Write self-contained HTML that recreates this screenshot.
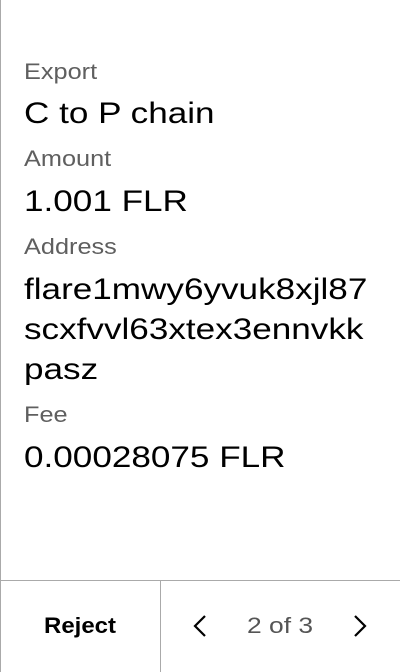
<!DOCTYPE html>
<html><head><style>
html,body{margin:0;padding:0;background:#fff;width:400px;height:672px;overflow:hidden;font-family:"Liberation Sans",sans-serif;position:relative}
.l{position:absolute;left:24px;font-size:22px;color:#5f5f5f;line-height:24px;transform:scaleX(1.15);transform-origin:0 0;white-space:nowrap}
.v{position:absolute;left:24px;font-size:30px;color:#000;line-height:34px;transform:scaleX(1.17);transform-origin:0 0;white-space:nowrap}
</style></head><body>
<div style="position:absolute;left:0;top:0;width:1px;height:672px;background:#aaa"></div>
<div class="l" style="top:60px">Export</div>
<div class="v" style="top:97px">C to P chain</div>
<div class="l" style="top:147px">Amount</div>
<div class="v" style="top:185px">1.001 FLR</div>
<div class="l" style="top:235px">Address</div>
<div class="v" style="top:273px">flare1mwy6yvuk8xjl87</div>
<div class="v" style="top:313px">scxfvvl63xtex3ennvkk</div>
<div class="v" style="top:353px">pasz</div>
<div class="l" style="top:403px">Fee</div>
<div class="v" style="top:441px">0.00028075 FLR</div>
<div style="position:absolute;left:0;top:580px;width:400px;height:1px;background:#aaa"></div>
<div style="position:absolute;left:160px;top:580px;width:1px;height:92px;background:#aaa"></div>
<div style="position:absolute;left:44px;top:612px;font-size:22px;font-weight:bold;line-height:28px;transform:scaleX(1.09);transform-origin:0 0">Reject</div>
<svg style="position:absolute;left:190px;top:612px" width="20" height="28" viewBox="0 0 20 28"><path d="M15 4 L5 14 L15 24" fill="none" stroke="#000" stroke-width="2.2"/></svg>
<div style="position:absolute;left:247px;top:612px;font-size:22px;color:#555;line-height:28px;transform:scaleX(1.2);transform-origin:0 0;white-space:nowrap">2 of 3</div>
<svg style="position:absolute;left:350px;top:612px" width="20" height="28" viewBox="0 0 20 28"><path d="M5 4 L15 14 L5 24" fill="none" stroke="#000" stroke-width="2.2"/></svg>
</body></html>
